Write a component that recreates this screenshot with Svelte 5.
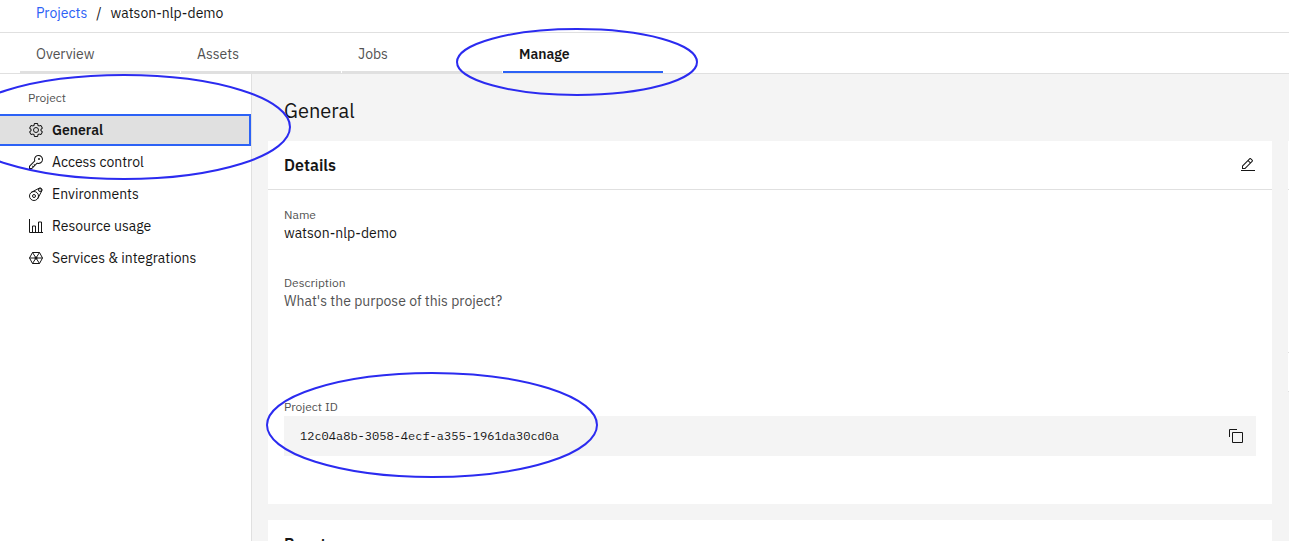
<script>
  const tabs = ['Overview', 'Assets', 'Jobs', 'Manage'];
  const links = [
    { id: 'general', label: 'General' },
    { id: 'access', label: 'Access control' },
    { id: 'environments', label: 'Environments' },
    { id: 'usage', label: 'Resource usage' },
    { id: 'services', label: 'Services & integrations' }
  ];
</script>

<div class="page">
  <header class="crumbs">
    <a href="#projects">Projects</a><span>/</span><span>watson-nlp-demo</span>
  </header>

  <nav class="tabs" aria-label="Project sections">
    {#each tabs as tab}
      <button type="button" class:active={tab === 'Manage'}>{tab}</button>
    {/each}
  </nav>

  <div class="body">
    <nav class="side" aria-label="Project">
      <div class="side-title">Project</div>
      {#each links as link}
        <a class="side-link" class:current={link.id === 'general'} href="#{link.id}">
          <svg viewBox="0 0 32 32" width="16" height="16" aria-hidden="true">
            {#if link.id === 'general'}
              <path d="M27,16.76c0-.25,0-.5,0-.76s0-.51,0-.77l1.92-1.68A2,2,0,0,0,29.3,11L26.94,7a2,2,0,0,0-1.73-1,2,2,0,0,0-.64.1l-2.43.82a11.35,11.35,0,0,0-1.31-.75l-.51-2.52a2,2,0,0,0-2-1.61H13.64a2,2,0,0,0-2,1.61l-.51,2.52a11.48,11.48,0,0,0-1.32.75L7.43,6.06A2,2,0,0,0,6.79,6,2,2,0,0,0,5.06,7L2.7,11a2,2,0,0,0,.41,2.51L5,15.24c0,.25,0,.5,0,.76s0,.51,0,.77L3.11,18.45A2,2,0,0,0,2.7,21L5.06,25a2,2,0,0,0,1.73,1,2,2,0,0,0,.64-.1l2.43-.82a11.35,11.35,0,0,0,1.31.75l.51,2.52a2,2,0,0,0,2,1.61h4.72a2,2,0,0,0,2-1.61l.51-2.52a11.48,11.48,0,0,0,1.32-.75l2.42.82a2,2,0,0,0,.64.1,2,2,0,0,0,1.73-1L29.3,21a2,2,0,0,0-.41-2.51ZM25.21,24l-3.43-1.16a8.86,8.86,0,0,1-2.71,1.57L18.36,28H13.64l-.71-3.55a9.36,9.36,0,0,1-2.7-1.57L6.79,24,4.43,20l2.72-2.4a8.9,8.9,0,0,1,0-3.13L4.43,12,6.79,8l3.43,1.16a8.86,8.86,0,0,1,2.71-1.57L13.64,4h4.72l.71,3.55a9.36,9.36,0,0,1,2.7,1.57L25.21,8,27.57,12l-2.72,2.4a8.9,8.9,0,0,1,0,3.13L27.57,20Z" />
              <circle class="line" cx="16" cy="16" r="5" />
            {:else if link.id === 'access'}
              <path d="M21,2a9,9,0,0,0-9,9,8.87,8.87,0,0,0,.39,2.61L2,24v6H8L18.39,19.61A9,9,0,0,0,30,11.74,8.77,8.77,0,0,0,21,2Zm0,16a7,7,0,0,1-2-.3l-1.15-.35L17,18.2,13.8,21.4,12.41,20,11,21.41l1.38,1.38-1.59,1.59L9.41,23,8,24.41l1.38,1.38L7.17,28H4V24.83L13.8,15l.84-.84L14.3,13A7,7,0,1,1,21,18Z" />
              <circle cx="22" cy="10" r="2" />
            {:else if link.id === 'environments'}
              <circle class="line" cx="12" cy="20" r="9" />
              <circle class="line" cx="12" cy="20" r="3" />
              <path class="line" d="M6 13L23 4a4 4 0 0 1 5 5L19 26" />
              <circle class="line" cx="24" cy="8" r="3" />
            {:else if link.id === 'usage'}
              <path class="line" d="M3 2v27h27M9 28V16h6v12M21 28V8h6v20" />
            {:else}
              <path class="line" d="M9 5h14l6 11-6 11H9L3 16zM9 5l14 22M23 5L9 27M3 16h26" />
              <circle cx="16" cy="16" r="3" />
            {/if}
          </svg>
          {link.label}
        </a>
      {/each}
    </nav>

    <main>
      <h1>General</h1>
      <div class="columns">
        <div class="stack">
          <section class="card">
            <div class="card-head">
              <h2>Details</h2>
              <button type="button" class="icon" aria-label="Edit details">
                <svg viewBox="0 0 32 32" width="16" height="16" aria-hidden="true">
                  <path d="M2 26H30V28H2zM25.4 9c.8-.8.8-2 0-2.8l-3.6-3.6c-.8-.8-2-.8-2.8 0l-15 15V24h6.4L25.4 9zM20.4 4L24 7.6l-3 3L17.4 7zM6 22v-3.6l10-10 3.6 3.6-10 10z" />
                </svg>
              </button>
            </div>
            <dl>
              <div class="field">
                <dt>Name</dt>
                <dd>watson-nlp-demo</dd>
              </div>
              <div class="field description">
                <dt>Description</dt>
                <dd class="muted">What's the purpose of this project?</dd>
              </div>
              <div class="field">
                <dt>Project ID</dt>
                <dd class="snippet">
                  <code>12c04a8b-3058-4ecf-a355-1961da30cd0a</code>
                  <button type="button" class="icon" aria-label="Copy project ID">
                    <svg viewBox="0 0 32 32" width="16" height="16" aria-hidden="true">
                      <path d="M28 10V28H10V10H28m0-2H10a2 2 0 0 0-2 2V28a2 2 0 0 0 2 2H28a2 2 0 0 0 2-2V10a2 2 0 0 0-2-2ZM4 18H2V4A2 2 0 0 1 4 2H18V4H4Z" />
                    </svg>
                  </button>
                </dd>
              </div>
            </dl>
          </section>
          <section class="card">
            <div class="card-head"><h2>Reset</h2></div>
          </section>
        </div>
        <div class="rail"><div class="rail-head"></div><div class="rail-body"></div><div class="rail-foot"></div></div>
      </div>
    </main>
  </div>

  <svg class="mark side-mark" viewBox="0 0 336 106" aria-hidden="true"><ellipse cx="168" cy="53" rx="166" ry="52" /></svg>
  <svg class="mark tab-mark" viewBox="0 0 242 68" aria-hidden="true"><ellipse cx="121" cy="34" rx="120" ry="33" /></svg>
  <svg class="mark id-mark" viewBox="0 0 332 106" aria-hidden="true"><ellipse cx="166" cy="53" rx="165" ry="52" /></svg>
</div>

<style>
  :global(body) { margin: 0; }
  .page {
    position: relative;
    height: 100vh;
    overflow: hidden;
    display: flex;
    flex-direction: column;
    background: #fff;
    color: #161616;
    font: 14px/18px "IBM Plex Sans", Roboto, "Liberation Sans", sans-serif;
  }
  .page * { box-sizing: border-box; }
  a { color: inherit; text-decoration: none; }
  button { font: inherit; color: inherit; border: 0; background: none; padding: 0; cursor: pointer; }
  h1, h2, dl, dd { margin: 0; }
  svg { display: block; flex: none; fill: currentColor; }
  .line { fill: none; stroke: currentColor; stroke-width: 2; }

  .crumbs {
    display: flex;
    gap: 9px;
    padding: 4px 36px 10px;
    border-bottom: 1px solid #e0e0e0;
  }
  .crumbs a { color: #2c62f6; }

  .tabs {
    display: flex;
    gap: 1px;
    padding-left: 20px;
    border-bottom: 1px solid #e0e0e0;
  }
  .tabs button {
    width: 160px;
    height: 40px;
    padding: 4px 16px 0;
    text-align: left;
    color: #525252;
    border-bottom: 2px solid #e0e0e0;
  }
  .tabs .active { color: #161616; font-weight: 600; border-color: #2c62f6; }

  .body { flex: 1; display: flex; min-height: 0; }
  .side { width: 252px; flex: none; border-right: 1px solid #e0e0e0; }
  .side-title { padding: 15px 28px 7px; font-size: 12px; color: #525252; }
  .side-link {
    display: flex;
    align-items: center;
    gap: 8px;
    height: 32px;
    padding-left: 28px;
  }
  .current {
    background: #e0e0e0;
    font-weight: 600;
    box-shadow: inset -2px 0 #2c62f6, inset 0 2px #2c62f6, inset 0 -2px #2c62f6;
  }

  main { flex: 1; min-width: 0; padding-left: 16px; background: #f4f4f4; }
  h1 { padding: 23px 16px 17px; font-size: 20px; line-height: 27px; font-weight: 400; }
  .columns { display: flex; gap: 16px; }
  .stack { flex: 1; display: flex; flex-direction: column; gap: 16px; }
  .card { background: #fff; }
  .card-head {
    display: flex;
    justify-content: space-between;
    align-items: center;
    height: 49px;
    padding: 0 16px;
    border-bottom: 1px solid #e0e0e0;
  }
  h2 { font-size: 16px; font-weight: 600; }
  dl { padding: 16px 16px 48px; }
  .field { margin-bottom: 32px; }
  .field:last-child { margin-bottom: 0; }
  .field.description { margin-bottom: 88px; }
  dt { font-size: 12px; color: #525252; }
  .muted { color: #525252; }
  .snippet {
    display: flex;
    align-items: center;
    justify-content: space-between;
    height: 40px;
    padding: 0 12px 0 16px;
    background: #f4f4f4;
  }
  code { font: 12px/16px "IBM Plex Mono", "Liberation Mono", monospace; }

  .rail { width: 1px; }
  .rail-head { height: 49px; background: #fff; border-bottom: 1px solid #e0e0e0; }
  .rail-body { height: 163px; background: #fff; border-bottom: 1px solid #e0e0e0; }
  .rail-foot { height: 39px; background: #fff; border-bottom: 1px solid #e0e0e0; }

  .mark { position: absolute; fill: none; stroke: #2b2bf0; stroke-width: 2; pointer-events: none; }
  .side-mark { left: -44px; top: 74px; width: 336px; height: 106px; }
  .tab-mark { left: 456px; top: 28px; width: 242px; height: 68px; }
  .id-mark { left: 266px; top: 372px; width: 332px; height: 106px; }
</style>
